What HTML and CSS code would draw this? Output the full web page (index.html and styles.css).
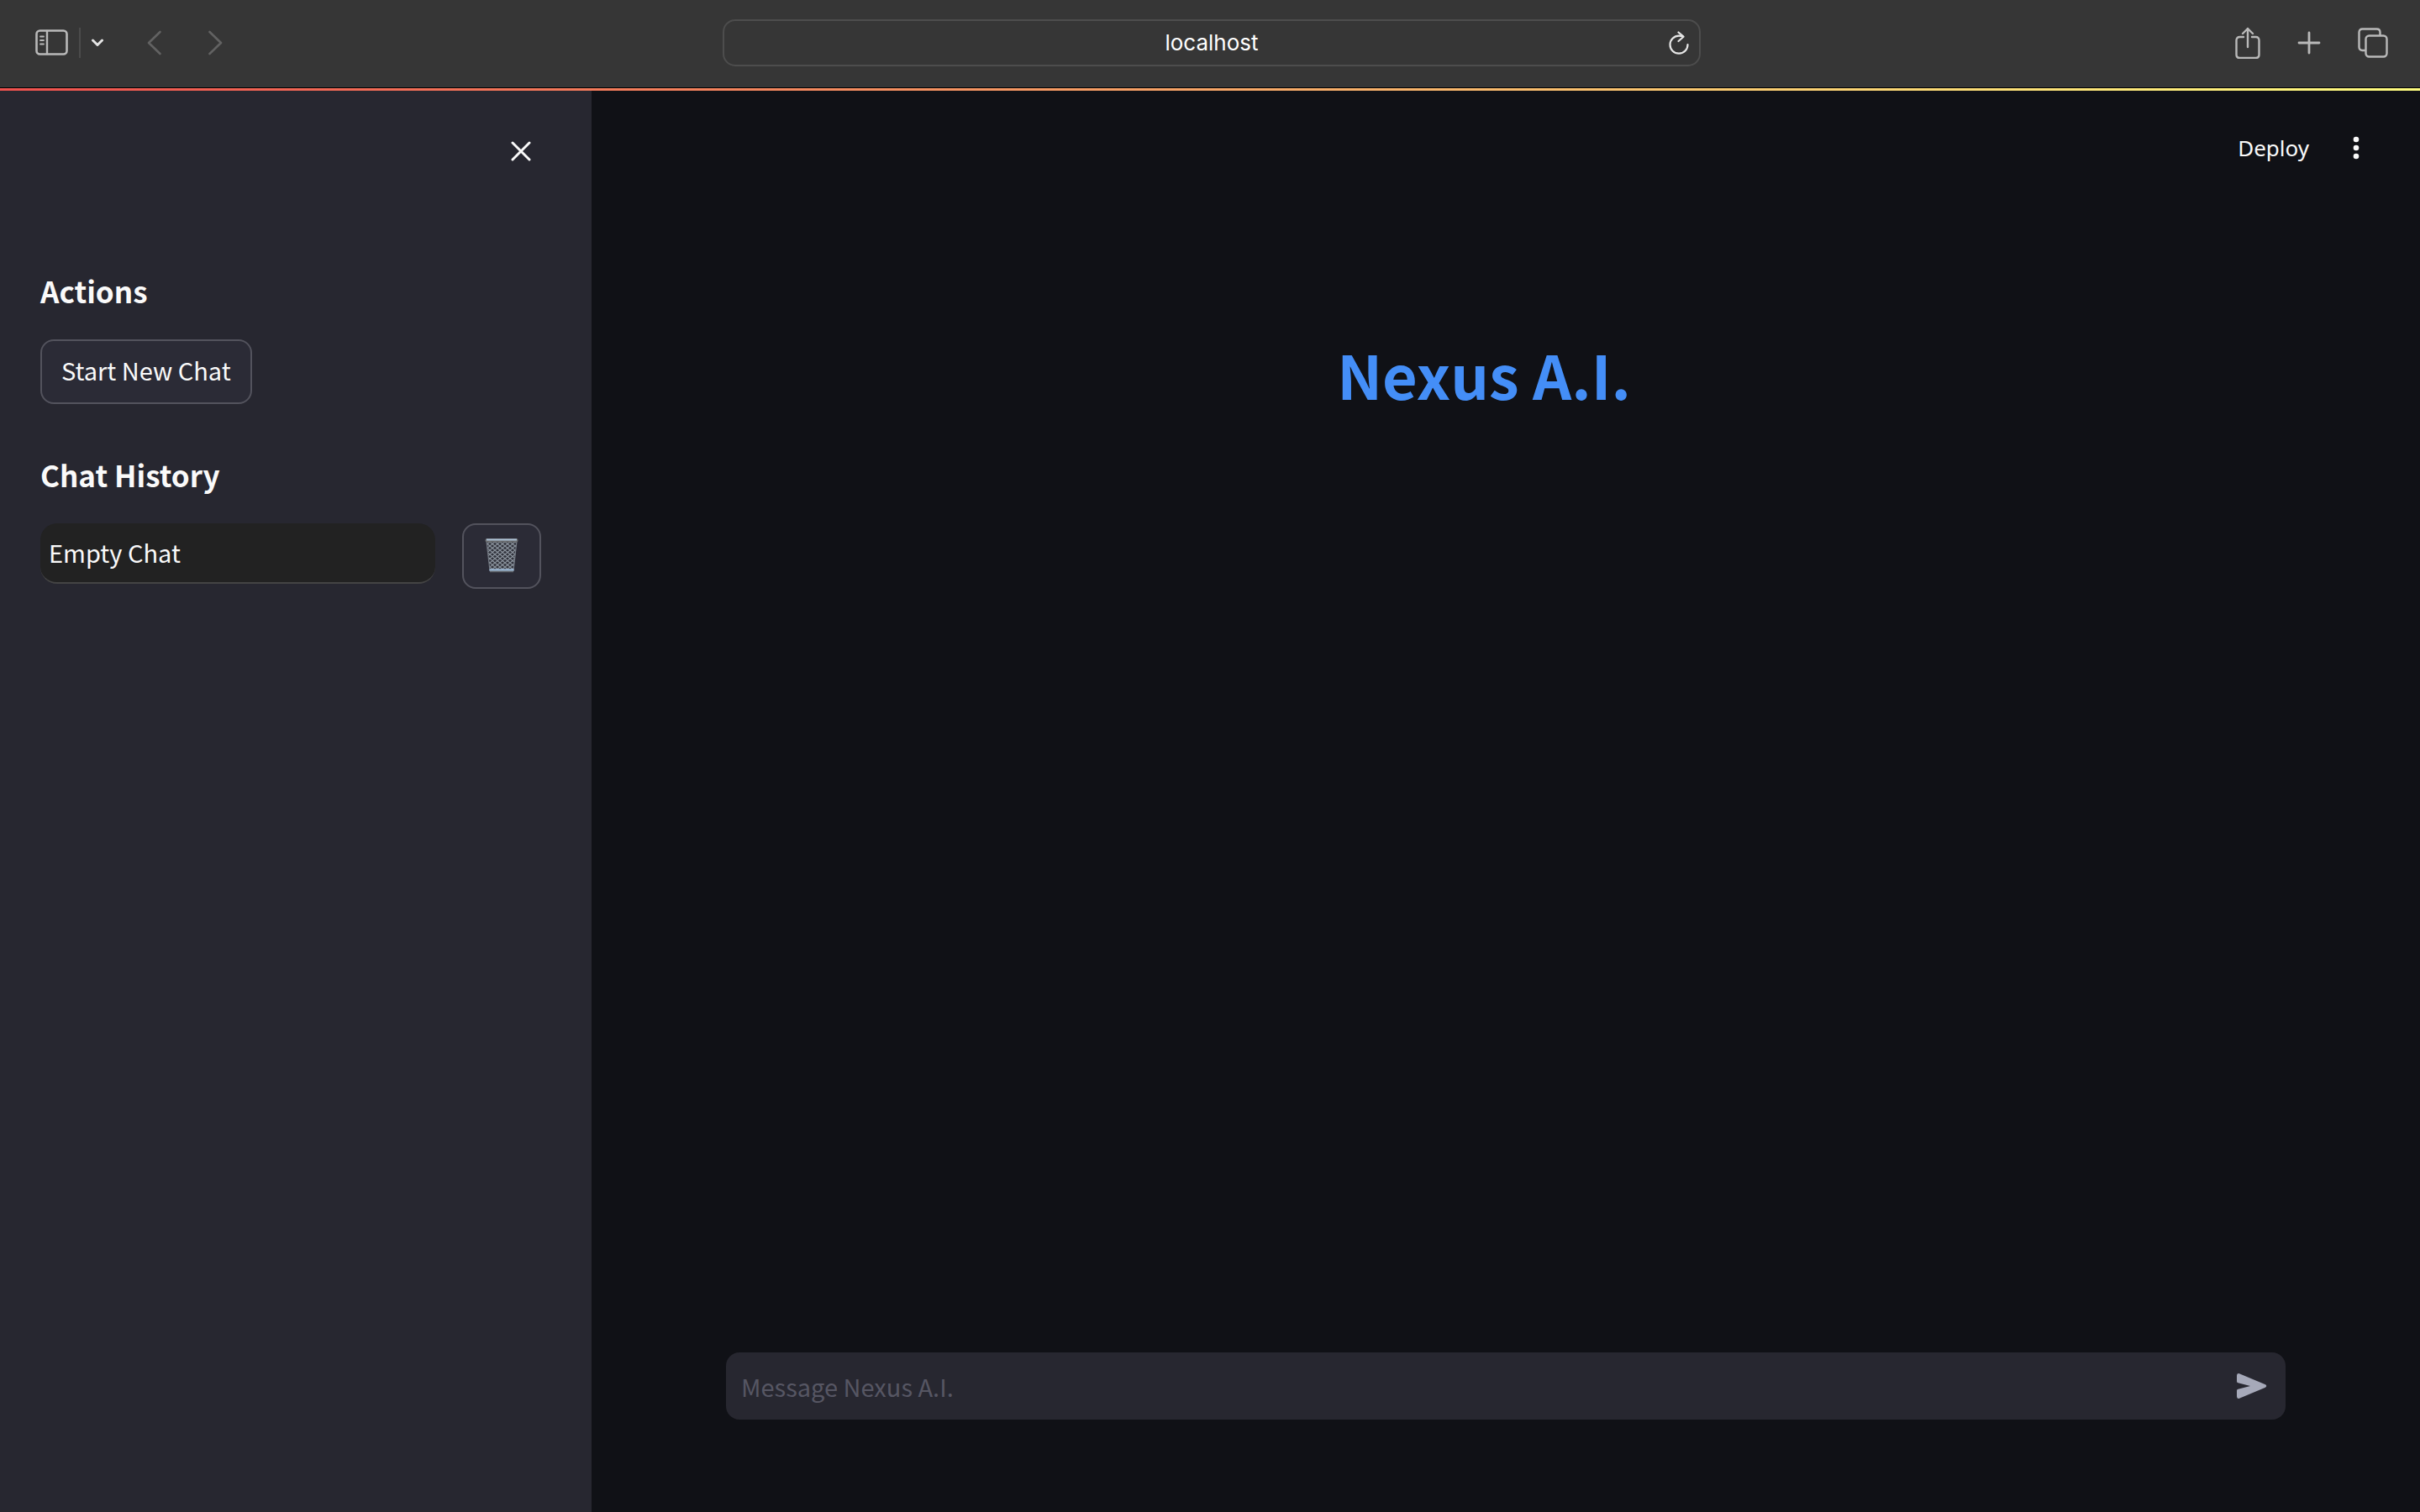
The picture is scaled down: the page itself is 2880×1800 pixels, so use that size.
FILE: index.html
```html
<!DOCTYPE html>
<html lang="en">
<head>
<meta charset="utf-8">
<title>Nexus A.I.</title>
<link rel="stylesheet" href="styles.css">
</head>
<body>
<div class="window">
  <header class="toolbar">
    <div class="tools tools-left">
      <button class="icon-button" aria-label="Show sidebar"><svg width="40" height="32" viewBox="0 0 40 32" fill="none" stroke="#b9b9b9" stroke-linecap="round"><rect x="1.5" y="1.5" width="36" height="28" rx="4" stroke-width="2.6"/><path d="M14 2v27" stroke-width="2.4"/><path d="M6 8.500h4M6 13h4M6 17.500h4" stroke-width="1.8"/></svg></button>
      <span class="divider"></span>
      <button class="icon-button menu-arrow" aria-label="Tab groups"><svg width="14" height="10" viewBox="0 0 14 10" fill="none" stroke="#e4e4e4" stroke-width="3" stroke-linecap="round" stroke-linejoin="round"><path d="M1.500 2L7 7.500 12.500 2"/></svg></button>
      <button class="icon-button back" aria-label="Back"><svg width="18" height="30" viewBox="0 0 18 30" fill="none" stroke="#626262" stroke-width="2.600" stroke-linecap="round" stroke-linejoin="round"><path d="M15.500 2L2 15l13.500 13"/></svg></button>
      <button class="icon-button forward" aria-label="Forward"><svg width="18" height="30" viewBox="0 0 18 30" fill="none" stroke="#626262" stroke-width="2.600" stroke-linecap="round" stroke-linejoin="round"><path d="M2.500 2L16 15 2.500 28"/></svg></button>
    </div>
    <div class="address">
      <input class="address-input" type="text" value="localhost" aria-label="Address">
      <button class="icon-button reload" aria-label="Reload"><svg width="24" height="28" viewBox="0 0 24 28" fill="none" stroke="#e6e6e6" stroke-width="2.200" stroke-linecap="round" stroke-linejoin="round"><path d="M22.500 16A10.500 10.500 0 1 1 12 5.700q3 0 5 1"/><path d="M11.500 1.500L17.500 6.700 11.500 12"/></svg></button>
    </div>
    <div class="tools tools-right">
      <button class="icon-button" aria-label="Share"><svg width="30" height="38" viewBox="0 0 30 38" fill="none" stroke="#b9b9b9" stroke-width="2.400" stroke-linecap="round" stroke-linejoin="round"><path d="M10 12H5.500Q1.500 12 1.500 16v17q0 4 4 4h19q4 0 4-4V16q0-4-4-4H20M15 24V2M9 8l6-6 6 6"/></svg></button>
      <button class="icon-button" aria-label="New tab"><svg width="28" height="28" viewBox="0 0 28 28" stroke="#b9b9b9" stroke-width="2.800" stroke-linecap="round"><path d="M14 2v24M2 14h24"/></svg></button>
      <button class="icon-button" aria-label="Tab overview"><svg width="36" height="36" viewBox="0 0 36 36" fill="none" stroke="#b9b9b9" stroke-width="2.400"><rect x="9.500" y="9.500" width="25" height="25" rx="4"/><path d="M9.500 27H5.500q-4 0-4-4V5.500q0-4 4-4h17q4 0 4 4v4"/></svg></button>
    </div>
  </header>
  <div class="accent-line"></div>
  <div class="app">
    <aside class="sidebar">
      <button class="icon-button close" aria-label="Close sidebar"><svg width="24" height="24" viewBox="0 0 24 24" stroke="#fafafa" stroke-width="3" stroke-linecap="round"><path d="M2 2l20 20M22 2L2 22"/></svg></button>
      <h2 class="heading">Actions</h2>
      <button class="button">Start New Chat</button>
      <h2 class="heading heading-history">Chat History</h2>
      <div class="chat-row">
        <button class="chat">Empty Chat</button>
        <button class="button delete" aria-label="Delete chat"><svg width="40" height="42" viewBox="0 0 40 42" fill="none">
          <defs><pattern id="mesh" width="6" height="5" patternUnits="userSpaceOnUse"><path d="M0 0l6 5M6 0L0 5" stroke="#8b939d" stroke-width="1.200"/></pattern></defs>
          <path d="M2 4h36l-4 35H6z" fill="#30323b"/><path d="M2 4h36l-4 35H6z" fill="url(#mesh)" stroke="#737983" stroke-width="1.200"/>
          <rect x="0.500" y="1" width="39" height="4.500" rx="2" fill="#6a6c6e"/><path d="M2 2.500h36" stroke="#abc0d5" stroke-width="2"/>
          <path d="M5.500 38.500h29" stroke="#9db9d6" stroke-width="2.500"/><path d="M6 40.500h28" stroke="#62666b" stroke-width="1.500"/></svg></button>
      </div>
    </aside>
    <main class="main">
      <div class="actions">
        <button class="deploy">Deploy</button>
        <button class="icon-button" aria-label="Main menu"><svg width="8" height="28" viewBox="0 0 8 28" fill="#fafafa"><circle cx="4" cy="4" r="3.300"/><circle cx="4" cy="14" r="3.300"/><circle cx="4" cy="24" r="3.300"/></svg></button>
      </div>
      <h1 class="title">Nexus A.I.</h1>
      <form class="composer">
        <input class="message" type="text" placeholder="Message Nexus A.I." aria-label="Message Nexus A.I.">
        <button class="icon-button" type="button" aria-label="Send"><svg width="36" height="30" viewBox="0 0 36 30" fill="#a6a9b9"><path d="M0 2.500Q0 -.7 3 .2L34 13.300Q36.500 15 34 16.700L3 29.800Q0 30.700 0 27.500V20.500Q0 19 1.500 18.700L16 15 1.500 11.300Q0 11 0 9.500z"/></svg></button>
      </form>
    </main>
  </div>
</div>
</body>
</html>
```
FILE: styles.css
```css
* {
  box-sizing: border-box;
}

body {
  margin: 0;
  background: #101116;
  color: #fafafa;
  font-family: "Noto Sans CJK SC", "Noto Sans", sans-serif;
}

button,
input {
  margin: 0;
  font: inherit;
  color: inherit;
}

.window {
  display: flex;
  flex-direction: column;
  min-height: 100vh;
}

.icon-button {
  display: flex;
  flex: none;
  padding: 0;
  border: 0;
  background: none;
}

.icon-button svg {
  display: block;
}

/* Browser toolbar */
.toolbar {
  display: grid;
  grid-template-columns: 1fr 41.6% 1fr;
  align-items: center;
  height: 104px;
  padding: 0 38px 2px 42px;
  background: #363636;
}

.tools {
  display: flex;
  align-items: center;
}

.tools-right {
  justify-content: flex-end;
  gap: 44px;
}

.divider {
  width: 2px;
  height: 36px;
  margin: 0 13px 0 12px;
  background: #4b4b4b;
}

.back {
  margin-left: 52px;
}

.forward {
  margin-left: 54px;
}

.address {
  display: flex;
  align-items: center;
  height: 56px;
  padding: 0 12px 0 36px;
  border: 2px solid #4d4d4d;
  border-radius: 15px;
}

.address-input {
  flex: 1;
  min-width: 0;
  padding: 0;
  border: 0;
  background: none;
  color: #fff;
  font: 26px/36px Inter, sans-serif;
  text-align: center;
}

.accent-line {
  height: 4px;
  border-top: 1px solid #000;
  background: linear-gradient(90deg, #f0524f, #f7a668 50%, #fffd80);
}

/* App */
.app {
  display: grid;
  grid-template-columns: 704px 1fr;
  flex: 1;
}

.sidebar {
  display: flex;
  flex-direction: column;
  align-items: flex-start;
  padding: 60px 60px 60px 48px;
  background: #272730;
}

.close {
  align-self: flex-end;
  margin: 0 12px 132px 0;
}

.heading {
  margin: 0 0 36px;
  font-size: 35px;
  font-weight: 700;
  line-height: 44px;
}

.heading-history {
  margin-top: 62px;
}

.button {
  padding: 16px 23px 21px;
  border: 2px solid #53535d;
  border-radius: 16px;
  background: #2b2b36;
  font-size: 29px;
  line-height: 36px;
}

.chat-row {
  display: flex;
  align-items: flex-start;
  align-self: stretch;
  gap: 32px;
}

.chat {
  flex: 1;
  padding: 16px 10px 18px;
  border: 0;
  border-bottom: 2px solid #444;
  border-radius: 20px;
  background: #222;
  font-size: 29px;
  line-height: 36px;
  text-align: left;
}

.delete {
  display: flex;
  justify-content: center;
  width: 94px;
  padding: 15px 0 17px;
}

.main {
  display: flex;
  flex-direction: column;
  padding: 48px 72px 110px 160px;
}

.actions {
  display: flex;
  align-items: center;
  justify-content: flex-end;
  gap: 52px;
  height: 40px;
}

.deploy {
  padding: 0;
  border: 0;
  background: none;
  font: 26px/38px "Noto Sans", sans-serif;
}

.title {
  margin: 206px 140px 0 0;
  padding-bottom: 48px;
  color: #448ef7;
  font-size: 72px;
  font-weight: 700;
  line-height: 86px;
  text-align: center;
}

.composer {
  display: flex;
  align-items: center;
  height: 80px;
  margin: auto 88px 0 0;
  padding: 0 22px 0 18px;
  border-radius: 16px;
  background: #272730;
}

.message {
  flex: 1;
  min-width: 0;
  padding: 0;
  border: 0;
  background: none;
  font-size: 29px;
  line-height: 44px;
}

.message::placeholder {
  color: #565663;
  opacity: 1;
}
```
